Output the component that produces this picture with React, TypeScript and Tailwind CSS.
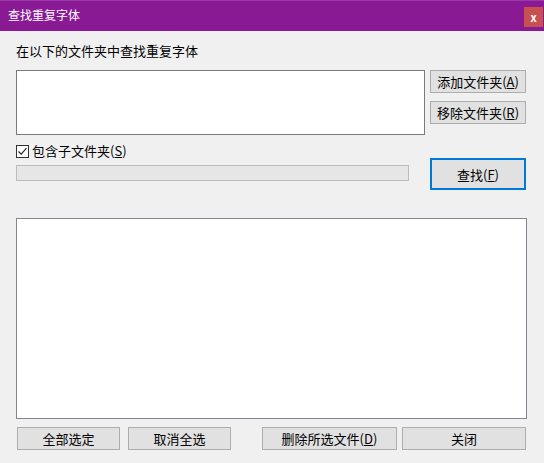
import React from 'react';

const FONT = '"Noto Sans CJK SC", "Noto Sans", sans-serif';

// Win10 风格按钮
const Btn: React.FC<{ className?: string; children: React.ReactNode; focused?: boolean }> = ({
  className = '',
  children,
  focused,
}) => (
  <button
    className={`flex items-center justify-center bg-[#e1e1e1] text-[13px] leading-none text-black ${
      focused ? 'border-2 border-[#0078d7]' : 'border border-[#adadad]'
    } ${className}`}
  >
    {children}
  </button>
);

const Check: React.FC = () => (
  <span className="flex h-[13px] w-[13px] items-center justify-center border border-[#333] bg-white">
    <svg width="11" height="11" viewBox="0 0 11 11">
      <path d="M1.5 5.5 L4.2 8.2 L9.5 2.2" fill="none" stroke="#222" strokeWidth="1.1" />
    </svg>
  </span>
);

export default function App() {
  return (
    <div
      className="flex h-[463px] w-[544px] flex-col bg-[#f0f0f0] text-black"
      style={{ fontFamily: FONT }}
    >
      {/* 标题栏 */}
      <div className="flex h-[31px] shrink-0 items-start justify-between border-t border-[#9b3aa6] bg-[#891a94]">
        <span className="mt-[6px] pl-2 text-[12px] leading-[16px] text-white">查找重复字体</span>
        <span className="mr-[1px] mt-[6px] flex h-[20px] w-[19px] items-center justify-center bg-[#c75050] text-[11px] font-bold leading-none text-white">
          x
        </span>
      </div>

      <div className="flex flex-col pl-4 pr-[17px]">
        <p className="mt-[12px] text-[13px] leading-[16px]">在以下的文件夹中查找重复字体</p>

        <div className="mt-[11px] flex">
          <div className="h-[65px] w-[409px] border border-[#7a7a7a] bg-white" />
          <div className="ml-[5px] flex flex-col gap-[8px]">
            <Btn className="h-[23px] w-[96px]">
              添加文件夹(<u>A</u>)
            </Btn>
            <Btn className="h-[23px] w-[96px]">
              移除文件夹(<u>R</u>)
            </Btn>
          </div>
        </div>

        <div className="mt-[8px] flex">
          <div className="flex w-[393px] flex-col">
            <label className="flex h-[16px] items-center gap-[3px] text-[13px] leading-[16px]">
              <Check />
              <span>
                包含子文件夹(<u>S</u>)
              </span>
            </label>
            <div className="mt-[6px] h-[16px] w-[393px] border border-[#bcbcbc] bg-[#e6e6e6]" />
          </div>
          <Btn focused className="ml-[21px] mt-[15px] h-[32px] w-[96px]">
            查找(<u>F</u>)
          </Btn>
        </div>

        <div className="mt-[28px] h-[201px] w-[511px] border border-[#828790] bg-white" />

        <div className="mt-[8px] flex">
          <Btn className="ml-[1px] h-[23px] w-[103px]">全部选定</Btn>
          <Btn className="ml-[8px] h-[23px] w-[103px]">取消全选</Btn>
          <Btn className="ml-[31px] h-[23px] w-[135px]">
            删除所选文件(<u>D</u>)
          </Btn>
          <Btn className="ml-[5px] h-[23px] w-[124px]">关闭</Btn>
        </div>
      </div>
    </div>
  );
}
